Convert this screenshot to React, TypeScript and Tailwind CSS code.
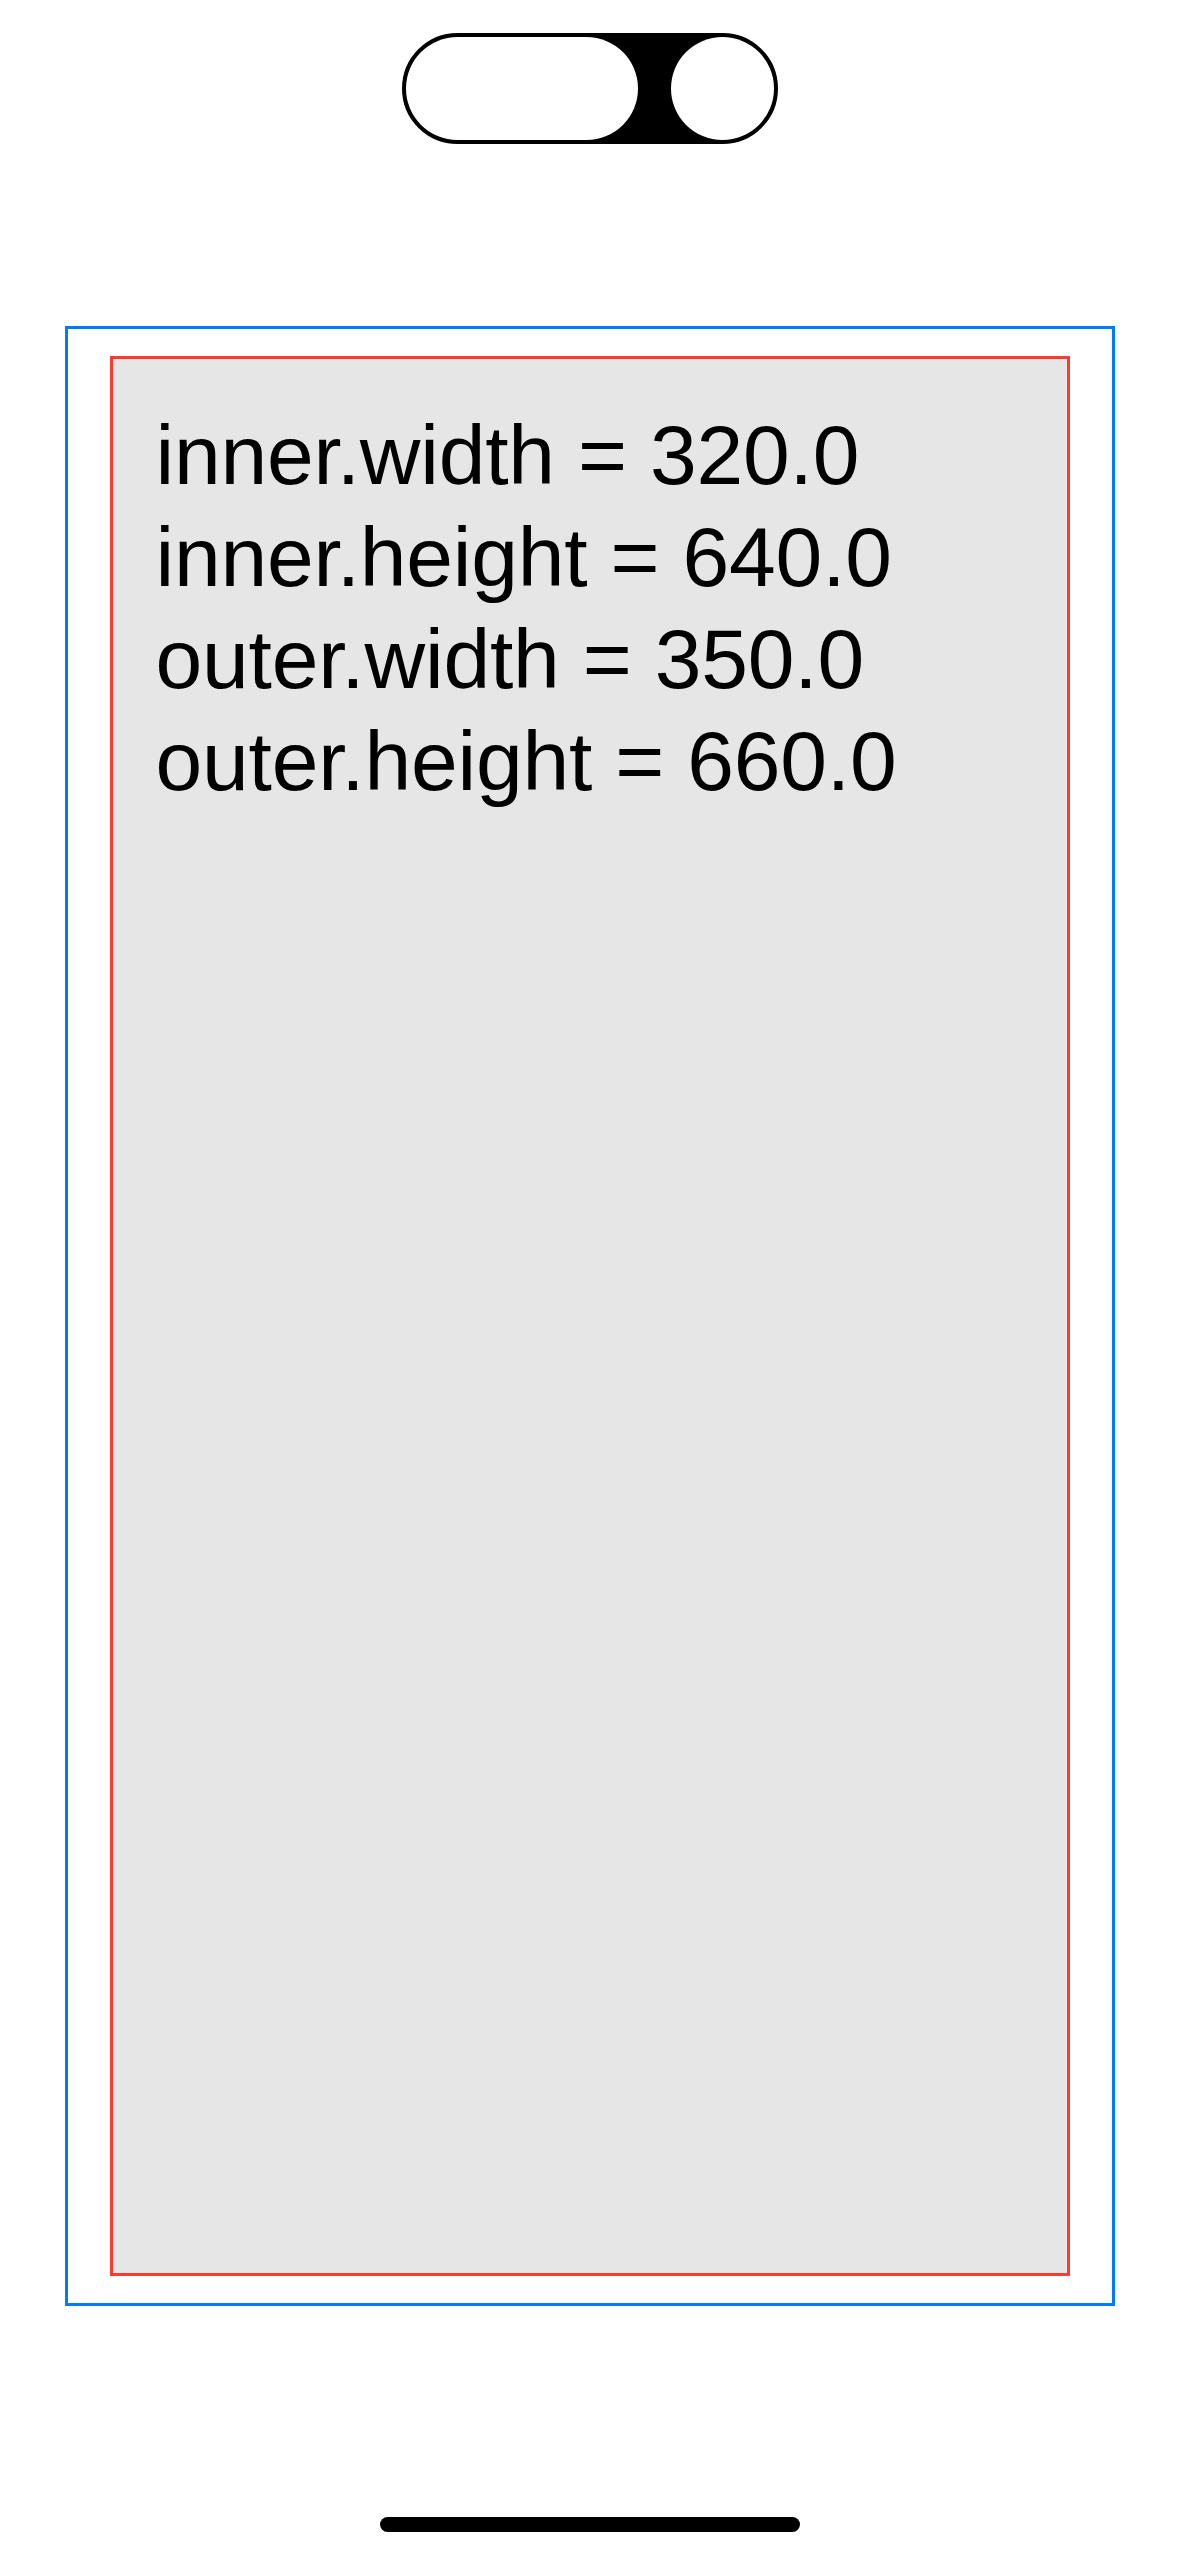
import React from "react";

const lines = [
  "inner.width = 320.0",
  "inner.height = 640.0",
  "outer.width = 350.0",
  "outer.height = 660.0",
];

const App = () => {
  return (
    <div className="w-[1179px] h-[2556px] bg-white flex flex-col items-center font-['Liberation_Sans',Arial,sans-serif]">
      {/* island */}
      <div className="mt-[33px] w-[376px] h-[111px] rounded-full border-[3px] border-black bg-black p-[1px] flex items-center justify-between">
        <div className="w-[232px] h-[103px] rounded-full bg-white"></div>
        <div className="w-[103px] h-[103px] rounded-full bg-white"></div>
      </div>

      {/* outer box */}
      <div className="mt-[182px] w-[1050px] h-[1980px] border-[3px] border-[#007aff] flex items-center justify-center">
        <div className="w-[960px] h-[1920px] border-[3px] border-[#ff3b30] bg-[#e6e6e6] pt-[45px] pl-[43px]">
          {lines.map((t) => (
            <p key={t} className="text-[84px] leading-[102px] text-black tracking-[-0.2px]">
              {t}
            </p>
          ))}
        </div>
      </div>

      {/* home indicator */}
      <div className="mt-[211px] w-[420px] h-[15px] rounded-full bg-black"></div>
    </div>
  );
};

export default App;
